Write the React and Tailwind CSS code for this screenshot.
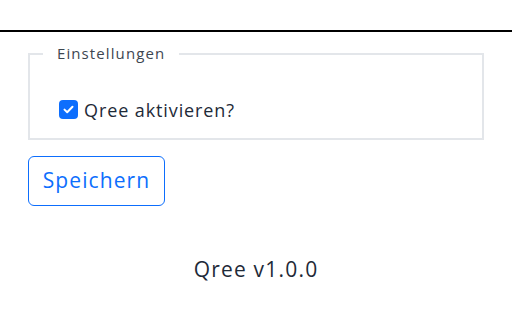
export default function App() {
  return (
    <div className="w-[512px] h-[320px] bg-white text-[#1e2a38] overflow-hidden" style={{ fontFamily: '"Open Sans", Lato, sans-serif' }}>
      <div className="h-[32px] border-b-2 border-black" />
      <div className="pl-[28px] pr-[28px] pt-[13px]">
        <fieldset className="border-2 border-[#e3e6ea] pl-[13px] pr-4 pt-0 m-0 h-[95px]">
          <legend className="px-[14px] text-[15px] tracking-[1.1px] text-[#3d4650] leading-[17px]">Einstellungen</legend>
          <label className="flex items-center gap-[6px] mt-[38px] ml-[16px]">
            <span className="w-[19px] h-[19px] rounded-[4px] bg-[#0d6efd] flex items-center justify-center">
              <svg width="11" height="9" viewBox="0 0 11 9" fill="none">
                <path d="M1.5 4.6 L4.2 7.2 L9.5 1.8" stroke="white" strokeWidth="2" strokeLinecap="round" strokeLinejoin="round" />
              </svg>
            </span>
            <span className="text-[18px] tracking-[0.9px] text-[#1e2a38] leading-none">Qree aktivieren?</span>
          </label>
        </fieldset>
        <button className="mt-[16px] w-[137px] h-[50px] border-[1.5px] border-[#0d6efd] rounded-[6px] text-[#0d6efd] text-[21px] tracking-[1.1px] flex items-center justify-center">
          Speichern
        </button>
      </div>
      <div className="mt-[49px] text-center text-[21px] tracking-[1.2px] leading-[28px] text-[#1e2a38]">Qree v1.0.0</div>
    </div>
  );
}
